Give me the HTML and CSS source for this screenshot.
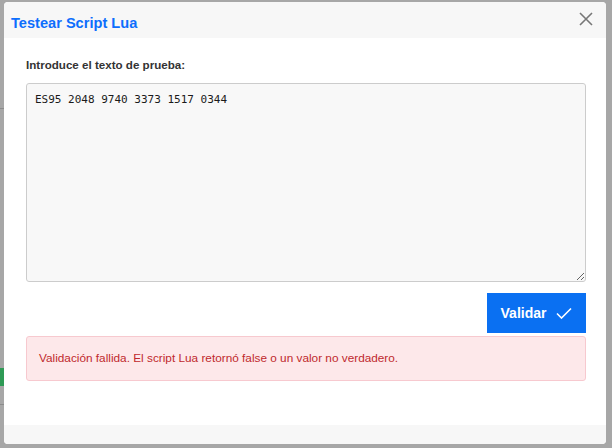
FILE: index.html
```html
<!DOCTYPE html>
<html lang="es">
<head>
    <meta charset="UTF-8">
    <meta name="viewport" content="width=device-width, initial-scale=1.0">
    <title>Testear Script Lua</title>
    <link rel="stylesheet" href="styles.css">
</head>
<body>

<!-- pagina de fondo, tapada por el overlay -->
<div class="page-behind">
    <span class="bg-line l1"></span>
    <span class="bg-line l2"></span>
    <span class="bg-tag"></span>
</div>

<div class="overlay">
    <div class="modal">
        <div class="modal-header">
            <h2 class="modal-title">Testear Script Lua</h2>
            <button class="btn-close" type="button" aria-label="Cerrar">
                <svg width="14" height="14" viewBox="0 0 14 14">
                    <path d="M1 1 L13 13 M13 1 L1 13" stroke="#777" stroke-width="1.6" fill="none"/>
                </svg>
            </button>
        </div>
        <div class="modal-body">
            <label for="test-input" class="field-label">Introduce el texto de prueba:</label>
            <textarea id="test-input" class="test-area">ES95 2048 9740 3373 1517 0344</textarea>
            <div class="actions">
                <button class="btn-validate" type="button">
                    Validar
                    <svg width="16" height="12" viewBox="0 0 16 12">
                        <path d="M1 6.5 L5.5 11 L15 1.5" stroke="#fff" stroke-width="1.6" fill="none"/>
                    </svg>
                </button>
            </div>
            <div class="alert-error">Validación fallida. El script Lua retornó false o un valor no verdadero.</div>
        </div>
        <div class="modal-footer"></div>
    </div>
</div>

</body>
</html>
```

FILE: styles.css
```css
html, body {
    margin: 0;
    padding: 0;
    height: 100%;
}
body {
    background: #a7a7a7;
    font-family: 'Liberation Sans', Arial, sans-serif;
    color: #333;
    overflow: hidden;
}
.page-behind {
    position: absolute;
    inset: 0;
}
.bg-line {
    position: absolute;
    left: 0;
    width: 4px;
    height: 1px;
    background: #8c8c8c;
}
.l1 { top: 108px; }
.l2 { top: 404px; }
.bg-tag {
    position: absolute;
    left: 0;
    top: 368px;
    width: 4px;
    height: 18px;
    background: #2e9a55;
}
.overlay {
    position: absolute;
    inset: 0;
    padding: 2px 6px 4px 4px;
    display: flex;
}
.modal {
    flex: 1;
    background: #fff;
    border-radius: 4px;
    display: flex;
    flex-direction: column;
    overflow: hidden;
}
.modal-header {
    background: #f7f7f7;
    height: 36px;
    display: flex;
    align-items: center;
    justify-content: space-between;
    padding: 0 13px 0 7px;
}
.modal-title {
    margin: 0;
    font-size: 14.6px;
    font-weight: bold;
    color: #0d6efd;
    padding-top: 5px;
}
.btn-close {
    background: none;
    border: 0;
    padding: 0;
    display: flex;
    margin-top: -2px;
}
.modal-body {
    flex: 1;
    padding: 20px 20px 0 22px;
    display: flex;
    flex-direction: column;
}
.field-label {
    font-size: 11.6px;
    font-weight: bold;
    color: #333;
    margin-bottom: 12px;
}
.test-area {
    height: 199px;
    box-sizing: border-box;
    background: #f8f8f8;
    border: 1px solid #ccc;
    border-radius: 3px;
    padding: 9px 8px;
    font-family: 'DejaVu Sans Mono', monospace;
    font-size: 11px;
    color: #1a1a1a;
    resize: vertical;
}
.actions {
    display: flex;
    justify-content: flex-end;
    margin-top: 11px;
}
.btn-validate {
    width: 99px;
    height: 40px;
    background: #0a70f2;
    border: 0;
    color: #fff;
    font-family: 'Liberation Sans', Arial, sans-serif;
    font-size: 14px;
    font-weight: bold;
    display: flex;
    align-items: center;
    justify-content: center;
    gap: 10px;
}
.alert-error {
    margin-top: 3px;
    background: #fde8ea;
    border: 1px solid #f7c9cf;
    border-radius: 3px;
    padding: 14px 12px 15px;
    font-size: 11.8px;
    color: #c0282d;
}
.modal-footer {
    background: #f7f7f7;
    height: 19px;
}
```
